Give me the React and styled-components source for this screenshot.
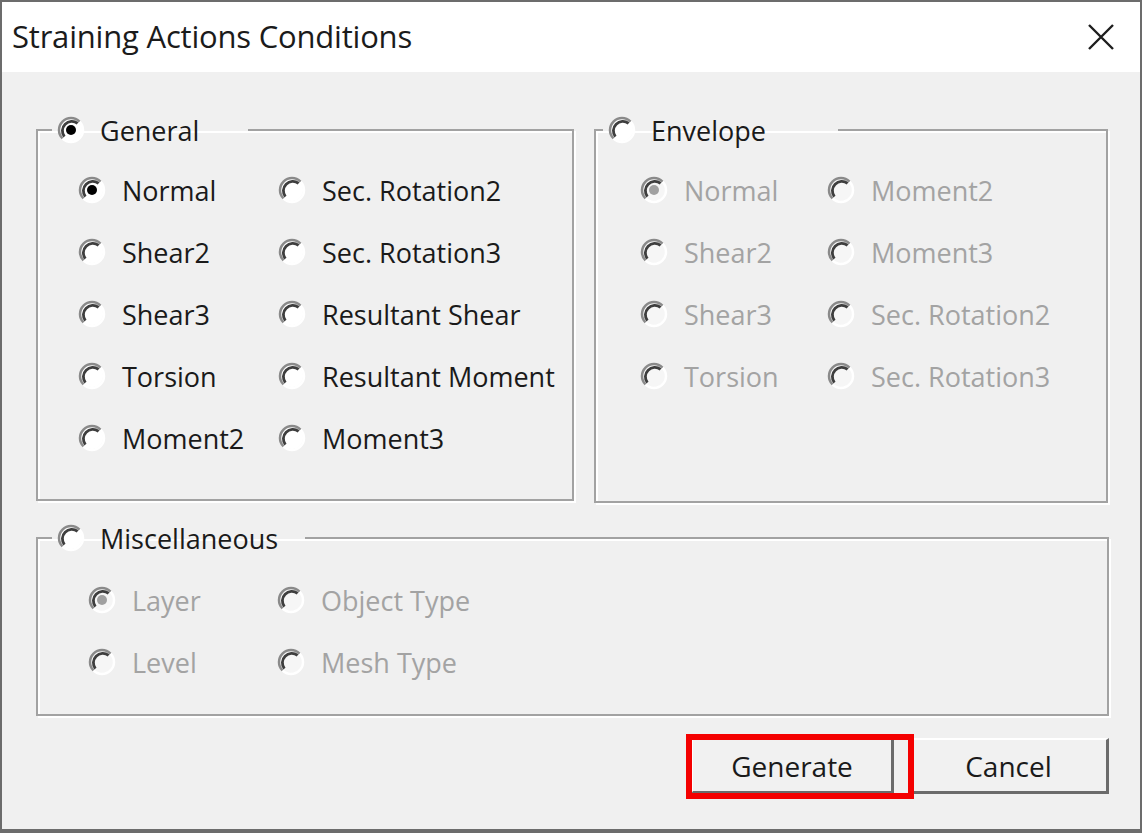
import React from "react";
import styled, { createGlobalStyle } from "styled-components";

const GlobalStyle = createGlobalStyle`
  html, body { margin: 0; padding: 0; background: #ffffff; }
  body { font-family: "Open Sans", "Noto Sans", "Liberation Sans", sans-serif; }
  * { box-sizing: border-box; }
`;

const Window = styled.div`
  width: 1142px;
  height: 833px;
  border: 2px solid #6c6c6c;
  border-bottom-width: 4px;
  background: #f0f0f0;
  display: flex;
  flex-direction: column;
`;

const TitleBar = styled.div`
  height: 70px;
  flex: none;
  background: #ffffff;
  display: flex;
  align-items: center;
  justify-content: space-between;
  padding: 0 24px 0 10px;
`;

const Title = styled.div`
  font-size: 31px;
  color: #1b1b1b;
  letter-spacing: -0.2px;
  margin-top: -2px;
`;

const CloseButton = styled.div`
  width: 30px;
  height: 30px;
  display: flex;
  align-items: center;
  justify-content: center;
`;

const Body = styled.div`
  flex: 1;
  padding: 41px 31px 0 34px;
  display: flex;
  flex-direction: column;
`;

const TopRow = styled.div`
  display: flex;
  gap: 20px;
`;

const Group = styled.fieldset`
  margin: ${(p) => p.$mt || 0}px 0 0 0;
  padding: 0;
  width: ${(p) => p.$w}px;
  height: ${(p) => p.$h}px;
  border: 2px solid #a2a2a2;
  box-shadow: 2px 2px 0 #ffffff, inset 2px 2px 0 #ffffff;
  min-inline-size: 0;
`;

const Legend = styled.legend`
  margin-left: ${(p) => p.$ml}px;
  width: ${(p) => p.$w}px;
  height: 34px;
  padding: 0 0 0 5px;
  display: flex;
  align-items: center;
  gap: 15px;
  font-size: 27px;
  color: #1a1a1a;
`;

const Options = styled.div`
  display: grid;
  grid-template-columns: ${(p) => p.$col}px auto;
  grid-auto-rows: 62px;
  align-items: center;
  padding-top: ${(p) => p.$pt}px;
  padding-left: ${(p) => p.$pl}px;
`;

const Option = styled.div`
  display: flex;
  align-items: center;
  gap: 16px;
  font-size: 27px;
  white-space: nowrap;
  color: ${(p) => (p.$disabled ? "#a3a3a3" : "#1a1a1a")};
`;

const ButtonRow = styled.div`
  display: flex;
  justify-content: flex-end;
  gap: 15px;
  margin-top: 22px;
`;

const Highlight = styled.div`
  position: relative;
`;

const RedBox = styled.div`
  position: absolute;
  left: -5px;
  top: -4px;
  width: 228px;
  height: 65px;
  border: 6px solid #f40000;
  pointer-events: none;
`;

const Button = styled.button`
  width: ${(p) => p.$w}px;
  height: 56px;
  margin: 0;
  padding: 0;
  background: #f1f1f1;
  border-top: 2px solid #ffffff;
  border-left: 2px solid #ffffff;
  border-right: 3px solid #6b6b6b;
  border-bottom: 3px solid #6b6b6b;
  font-family: "Open Sans", "Noto Sans", sans-serif;
  font-size: 28px;
  color: #1a1a1a;
`;

function Radio({ checked, disabled }) {
  return (
    <svg width="28" height="28" viewBox="0 0 28 28" style={{ flex: "none" }}>
      <circle cx="14" cy="14" r="11" fill={disabled ? "#f6f6f6" : "#ffffff"} />
      <path d="M22.49 5.51 A12 12 0 0 1 5.51 22.49" fill="none" stroke="#ffffff" strokeWidth="2.5" />
      <path d="M22.49 5.51 A12 12 0 0 0 5.51 22.49" fill="none" stroke="#8a8a8a" strokeWidth="2.5" />
      <path d="M20.6 7.4 A9.4 9.4 0 0 0 7.4 20.6" fill="none" stroke="#3e3e3e" strokeWidth="2.8" />
      {checked && <circle cx="14" cy="14" r="5" fill={disabled ? "#a0a0a0" : "#000000"} />}
    </svg>
  );
}

function Item({ label, checked, disabled }) {
  return (
    <Option $disabled={disabled}>
      <Radio checked={checked} disabled={disabled} />
      <span>{label}</span>
    </Option>
  );
}

const general = [
  ["Normal", true], ["Sec. Rotation2"],
  ["Shear2"], ["Sec. Rotation3"],
  ["Shear3"], ["Resultant Shear"],
  ["Torsion"], ["Resultant Moment"],
  ["Moment2"], ["Moment3"],
];

const envelope = [
  ["Normal", true], ["Moment2"],
  ["Shear2"], ["Moment3"],
  ["Shear3"], ["Sec. Rotation2"],
  ["Torsion"], ["Sec. Rotation3"],
];

const misc = [
  ["Layer", true], ["Object Type"],
  ["Level"], ["Mesh Type"],
];

export default function App() {
  return (
    <>
      <GlobalStyle />
      <Window>
        <TitleBar>
          <Title>Straining Actions Conditions</Title>
          <CloseButton>
            <svg width="28" height="28" viewBox="0 0 28 28">
              <path d="M2 2 L26 26 M26 2 L2 26" stroke="#1e1e1e" strokeWidth="2.4" />
            </svg>
          </CloseButton>
        </TitleBar>
        <Body>
          <TopRow>
            <Group $w={538} $h={388}>
              <Legend $ml={14} $w={196}>
                <Radio checked />
                <span>General</span>
              </Legend>
              <Options $col={200} $pt={12} $pl={40}>
                {general.map(([l, c], i) => (
                  <Item key={i} label={l} checked={c} />
                ))}
              </Options>
            </Group>
            <Group $w={514} $h={390}>
              <Legend $ml={7} $w={235}>
                <Radio />
                <span>Envelope</span>
              </Legend>
              <Options $col={187} $pt={12} $pl={44}>
                {envelope.map(([l, c], i) => (
                  <Item key={i} label={l} checked={c} disabled />
                ))}
              </Options>
            </Group>
          </TopRow>
          <Group $w={1073} $h={195} $mt={18}>
            <Legend $ml={14} $w={253}>
              <Radio />
              <span>Miscellaneous</span>
            </Legend>
            <Options $col={189} $pt={14} $pl={50}>
              {misc.map(([l, c], i) => (
                <Item key={i} label={l} checked={c} disabled />
              ))}
            </Options>
          </Group>
          <ButtonRow>
            <Highlight>
              <Button $w={203}>Generate</Button>
              <RedBox />
            </Highlight>
            <Button $w={200}>Cancel</Button>
          </ButtonRow>
        </Body>
      </Window>
    </>
  );
}
